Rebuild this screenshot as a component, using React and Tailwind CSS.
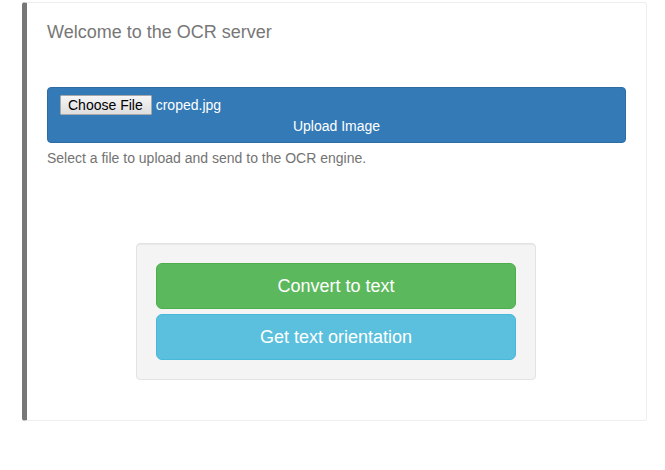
export default function App() {
  return (
    <div className="min-h-[470px] bg-white pt-[2px] font-['Liberation_Sans',Arial,sans-serif] text-[14px] leading-[20px] text-[#333]">
      <div className="ml-[22px] w-[625px] rounded-[3px] border border-l-[5px] border-[#eee] border-l-[#777] p-[20px]">
        <h4 className="-mt-[1px] mb-0 text-[18px] leading-[20px] text-[#777] font-normal">
          Welcome to the OCR server
        </h4>

        <label className="mt-[45px] block rounded-[4px] border border-[#2e6da4] bg-[#337ab7] px-[12px] py-[6px] text-center text-white">
          <span className="flex h-[21px] items-end">
            <span className="box-border h-[20px] rounded-[1px] border border-[#a9a9a9] bg-gradient-to-b from-[#f6f6f6] to-[#dedede] pl-[7px] pr-[8px] text-[14px] leading-[18px] text-black">
              Choose File
            </span>
            <span className="ml-[4px] text-[14px] leading-[20px]">croped.jpg</span>
          </span>
          <span className="block pt-[1px]">Upload Image</span>
        </label>
        <p className="mt-[5px] mb-0 text-[#737373]">
          Select a file to upload and send to the OCR engine.
        </p>

        <div className="mt-[75px] mb-[20px] ml-[89px] w-[400px] rounded-[4px] border border-[#e3e3e3] bg-[#f4f4f4] p-[19px] shadow-[inset_0_1px_1px_rgba(0,0,0,0.05)]">
          <div className="flex flex-col gap-[5px]">
            <button className="h-[46px] rounded-[6px] border border-[#4cae4c] bg-[#5cb85c] text-[18px] leading-[24px] text-white">
              Convert to text
            </button>
            <button className="h-[46px] rounded-[6px] border border-[#46b8da] bg-[#5bc0de] text-[18px] leading-[24px] text-white">
              Get text orientation
            </button>
          </div>
        </div>
      </div>
    </div>
  );
}
